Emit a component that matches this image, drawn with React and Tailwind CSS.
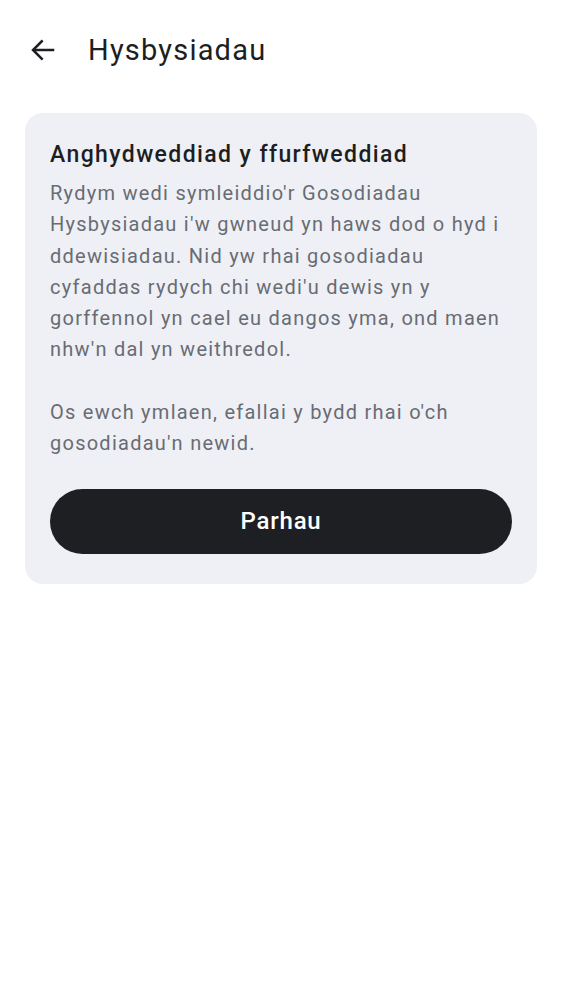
export default function App() {
  return (
    <div className="min-h-screen bg-white font-['Roboto',sans-serif] text-[#1d1e22]">
      {/* Top bar */}
      <div className="flex items-center h-[100px] px-[28px]">
        <button className="w-[30px] h-[30px] flex items-center justify-center">
          <svg width="30" height="30" viewBox="0 0 24 24" fill="none" stroke="#1d1e22" strokeWidth="2" strokeLinecap="square">
            <path d="M20 12H5" />
            <path d="M11 5l-7 7 7 7" />
          </svg>
        </button>
        <h1 className="ml-[30px] text-[29px] leading-none tracking-[1.2px]">Hysbysiadau</h1>
      </div>

      {/* Card */}
      <div className="mx-[25px] mt-[13px] rounded-[18px] bg-[#eff0f5] px-[25px] pt-[26px] pb-[30px]">
        <h2 className="text-[23px] leading-[32px] font-medium tracking-[1.4px] text-[#1d1e22]">
          Anghydweddiad y ffurfweddiad
        </h2>
        <p className="mt-[7px] text-[20px] leading-[31.3px] text-[#686c74] tracking-[1.25px]">
          Rydym wedi symleiddio'r Gosodiadau Hysbysiadau i'w gwneud yn haws dod o hyd i ddewisiadau. Nid yw rhai gosodiadau cyfaddas rydych chi wedi'u dewis yn y gorffennol yn cael eu dangos yma, ond maen nhw'n dal yn weithredol.
        </p>
        <p className="mt-[31.3px] text-[20px] leading-[31.3px] text-[#686c74] tracking-[1.25px]">
          Os ewch ymlaen, efallai y bydd rhai o'ch gosodiadau'n newid.
        </p>
        <button className="mt-[29px] w-full h-[65px] rounded-full bg-[#1e1f23] text-white text-[24px] font-medium tracking-[0.8px]">
          Parhau
        </button>
      </div>
    </div>
  );
}
